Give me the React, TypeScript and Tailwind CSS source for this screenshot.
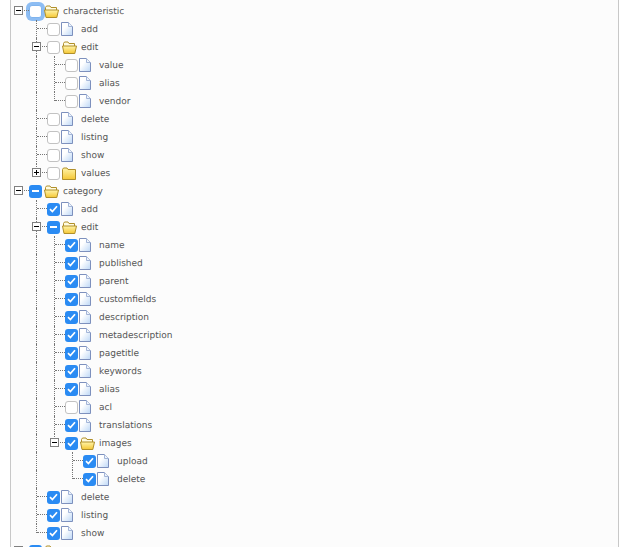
import React from "react";

type Node = { label: string; state?: "off" | "on" | "mixed" | "focus"; open?: boolean; closed?: boolean; children?: Node[] };

const leaf = (label: string, state: Node["state"] = "on"): Node => ({ label, state });

const tree: Node[] = [
  {
    label: "characteristic",
    state: "focus",
    open: true,
    children: [
      leaf("add", "off"),
      { label: "edit", state: "off", open: true, children: [leaf("value", "off"), leaf("alias", "off"), leaf("vendor", "off")] },
      leaf("delete", "off"),
      leaf("listing", "off"),
      leaf("show", "off"),
      { label: "values", state: "off", closed: true },
    ],
  },
  {
    label: "category",
    state: "mixed",
    open: true,
    children: [
      leaf("add"),
      {
        label: "edit",
        state: "mixed",
        open: true,
        children: [
          leaf("name"),
          leaf("published"),
          leaf("parent"),
          leaf("customfields"),
          leaf("description"),
          leaf("metadescription"),
          leaf("pagetitle"),
          leaf("keywords"),
          leaf("alias"),
          leaf("acl", "off"),
          leaf("translations"),
          { label: "images", state: "on", open: true, children: [leaf("upload"), leaf("delete")] },
        ],
      },
      leaf("delete"),
      leaf("listing"),
      leaf("show"),
    ],
  },
  { label: "", state: "mixed", open: true },
];

function Check({ state }: { state: Node["state"] }) {
  if (state === "on" || state === "mixed") {
    return (
      <span className="flex h-[13px] w-[13px] shrink-0 items-center justify-center rounded-[3px] bg-[#2a8bf3]">
        {state === "on" ? (
          <svg width="9" height="8" viewBox="0 0 9 8" fill="none">
            <path d="M1 4.2 L3.4 6.6 L8 1.2" stroke="#fff" strokeWidth="1.7" />
          </svg>
        ) : (
          <span className="h-[2px] w-[7px] bg-white" />
        )}
      </span>
    );
  }
  return (
    <span
      className={
        state === "focus"
          ? "h-[13px] w-[13px] shrink-0 rounded-[3px] border border-[#7fb4ee] bg-white shadow-[0_0_0_3px_#8dbdf3]"
          : "h-[13px] w-[13px] shrink-0 rounded-[3px] border border-[#c2c2c2] bg-white"
      }
    />
  );
}

function FileIcon() {
  return (
    <svg width="12" height="14" viewBox="0 0 12 14" className="shrink-0">
      <defs>
        <linearGradient id="fileGrad" x1="0" y1="0" x2="1" y2="1">
          <stop offset="0.35" stopColor="#ffffff" />
          <stop offset="1" stopColor="#bcd7f6" />
        </linearGradient>
      </defs>
      <path d="M0.5 0.5 H7.5 L11.5 4.5 V13.5 H0.5 Z" fill="url(#fileGrad)" stroke="#7d90bd" />
      <path d="M7.5 0.5 V4.5 H11.5" fill="#eef4fc" stroke="#a3b5d8" />
    </svg>
  );
}

function FolderGrad() {
  return (
    <defs>
      <linearGradient id="folderGrad" x1="0" y1="0" x2="0" y2="1">
        <stop offset="0" stopColor="#fff4a8" />
        <stop offset="1" stopColor="#f5c734" />
      </linearGradient>
    </defs>
  );
}

function FolderOpen() {
  return (
    <svg width="15" height="13" viewBox="0 0 15 13" className="shrink-0">
      <FolderGrad />
      <path d="M1.5 5 V2.5 L2.5 1 H6 L7 2.5 H12.5 V5" fill="#fffbe0" stroke="#b08f2a" />
      <path d="M0.5 5 H14.5 L12.8 12.5 H2 Z" fill="url(#folderGrad)" stroke="#b08f2a" />
    </svg>
  );
}

function FolderClosed() {
  return (
    <svg width="15" height="13" viewBox="0 0 15 13" className="shrink-0">
      <FolderGrad />
      <path d="M0.5 2.5 L1.5 1 H5 L6 2.5 H13.5 V12.5 H0.5 Z" fill="url(#folderGrad)" stroke="#b08f2a" />
    </svg>
  );
}

function Expander({ open }: { open: boolean }) {
  return (
    <span className="absolute left-[3px] top-[4px] flex h-[9px] w-[9px] items-center justify-center border border-[#808080] bg-white">
      <span className="relative h-px w-[5px] bg-black">
        {!open && <span className="absolute left-[2px] top-[-2px] h-[5px] w-px bg-black" />}
      </span>
    </span>
  );
}

function Row({ node, guides, last, root }: { node: Node; guides: boolean[]; last: boolean; root: boolean }) {
  const hasKids = node.open || node.closed;
  return (
    <div className="flex h-[18px] items-stretch">
      {guides.map((g, i) => (
        <div key={i} className="w-[18px] shrink-0">
          {g && <div className="ml-[7px] h-full border-l border-dotted border-[#777]" />}
        </div>
      ))}
      <div className="relative w-[18px] shrink-0">
        {root ? (
          <div className="ml-[8px] h-[9px] w-[10px] border-b border-dotted border-[#777]" />
        ) : (
          <div className={`ml-[7px] w-[11px] border-l border-dotted border-[#777] ${last ? "h-[9px]" : "h-full"}`}>
            <div className="h-[9px] border-b border-dotted border-[#777]" />
          </div>
        )}
        {hasKids && <Expander open={!!node.open} />}
      </div>
      <div className="flex items-center">
        <Check state={node.state} />
        <span className={`flex w-[21px] shrink-0 ${hasKids ? "pl-[2px]" : "pl-[1px]"}`}>
          {node.open ? <FolderOpen /> : node.closed ? <FolderClosed /> : <FileIcon />}
        </span>
        {node.label && (
          <span className="mt-[2px] whitespace-nowrap text-[9px] leading-[18px] text-[#555] [font-family:'DejaVu_Sans',sans-serif] [text-rendering:geometricPrecision]">{node.label}</span>
        )}
      </div>
    </div>
  );
}

function Branch({ nodes, guides, root }: { nodes: Node[]; guides: boolean[]; root?: boolean }) {
  return (
    <>
      {nodes.map((n, i) => {
        const last = i === nodes.length - 1;
        return (
          <React.Fragment key={n.label + i}>
            <Row node={n} guides={guides} last={last} root={!!root} />
            {n.children && <Branch nodes={n.children} guides={root ? [false] : [...guides, !last]} />}
          </React.Fragment>
        );
      })}
    </>
  );
}

export default function App() {
  return (
    <div className="h-[547px] w-[628px] overflow-hidden bg-white pl-[10px] pr-[9px]">
      <div className="h-full overflow-hidden border-x border-[#c8c8c8] bg-[#fcfcfc] pt-[2px]">
        <Branch nodes={tree} guides={[]} root />
      </div>
    </div>
  );
}
